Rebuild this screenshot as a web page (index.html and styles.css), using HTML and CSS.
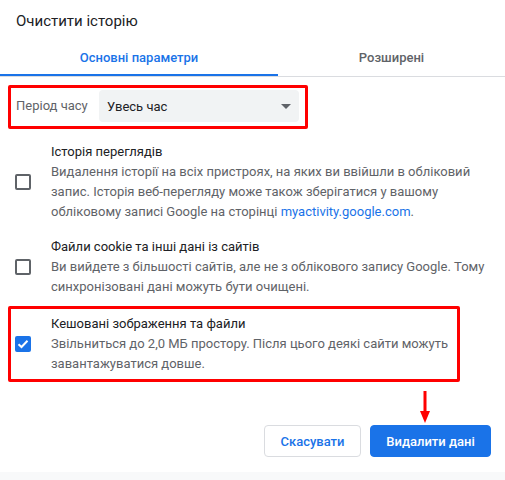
FILE: index.html
```html
<!DOCTYPE html>
<html lang="uk">
<head>
<meta charset="utf-8">
<link rel="stylesheet" href="styles.css">
</head>
<body>
<div class="dialog">
  <div class="header">Очистити історію</div>
  <div class="tabs">
    <div class="tab tab-active">Основні параметри</div>
    <div class="tab">Розширені</div>
  </div>
  <div class="period hl">
    <div class="period-label">Період часу</div>
    <div class="select">
      <span>Увесь час</span>
      <span class="caret"></span>
    </div>
  </div>
  <div class="item item-first">
    <span class="check"></span>
    <div class="item-text">
      <div class="item-title">Історія переглядів</div>
      <div class="item-desc">Видалення історії на всіх пристроях, на яких ви ввійшли в обліковий запис. Історія веб-перегляду може також зберігатися у вашому обліковому записі Google на сторінці <span class="link">myactivity.google.com</span>.</div>
    </div>
  </div>
  <div class="item item-second">
    <span class="check"></span>
    <div class="item-text">
      <div class="item-title">Файли cookie та інші дані із сайтів</div>
      <div class="item-desc">Ви вийдете з більшості сайтів, але не з облікового запису Google. Тому синхронізовані дані можуть бути очищені.</div>
    </div>
  </div>
  <div class="hl hl-item">
    <div class="item item-in-box">
      <span class="check checked">
        <svg width="12" height="10" viewBox="0 0 12 10"><path d="M1.5 5.2 L4.5 8 L10.5 1.8" fill="none" stroke="#fff" stroke-width="2"/></svg>
      </span>
      <div class="item-text">
        <div class="item-title">Кешовані зображення та файли</div>
        <div class="item-desc">Звільниться до 2,0 МБ простору. Після цього деякі сайти можуть завантажуватися довше.</div>
      </div>
    </div>
  </div>
  <div class="actions">
    <button class="btn btn-cancel">Скасувати</button>
    <button class="btn btn-primary">Видалити дані</button>
  </div>
  <div class="footer-strip"></div>
  <svg class="arrow" width="12" height="34" viewBox="0 0 12 34">
    <rect x="4.5" y="0" width="3" height="22" fill="#ff0000"/>
    <polygon points="1,20 11,20 6,32" fill="#ff0000"/>
  </svg>
</div>
</body>
</html>
```

FILE: styles.css
```css
html, body {
  margin: 0;
  padding: 0;
  background: #fff;
}
body {
  font-family: Roboto, "Liberation Sans", Arial, sans-serif;
  font-size: 13px;
  color: #202124;
}
.dialog {
  position: relative;
  width: 505px;
  height: 480px;
  overflow: hidden;
}
.header {
  font-size: 15px;
  line-height: 20px;
  padding: 11px 16px 7px;
  color: #202124;
}
.tabs {
  display: flex;
  height: 38px;
  border-bottom: 1px solid #dadce0;
}
.tab {
  box-sizing: border-box;
  height: 38px;
  display: flex;
  align-items: center;
  justify-content: center;
  font-weight: 500;
  color: #5f6368;
  width: 227px;
  padding-top: 1px;
}
.tab-active {
  width: 278px;
  color: #1a73e8;
  border-bottom: 2px solid #1a73e8;
  padding-top: 3px;
}
.hl {
  box-sizing: border-box;
  border: 3px solid #ff0000;
  border-radius: 2px;
}
.period {
  margin: 8px 0 0 8px;
  width: 300px;
  display: flex;
  align-items: center;
  padding: 2px 6px 4px 5px;
}
.period-label {
  flex: 0 0 83px;
  color: #5f6368;
  line-height: 20px;
}
.select {
  box-sizing: border-box;
  width: 200px;
  height: 32px;
  background: #f1f3f4;
  border-radius: 4px;
  display: flex;
  align-items: center;
  justify-content: space-between;
  padding: 0 8px 0 8px;
  color: #202124;
}
.caret {
  width: 0;
  height: 0;
  border-left: 5px solid transparent;
  border-right: 5px solid transparent;
  border-top: 5px solid #5f6368;
  margin-top: 1px;
}
.item {
  display: flex;
  align-items: center;
  padding-left: 15px;
  padding-right: 16px;
}
.item-first {
  margin-top: 13px;
}
.item-second {
  margin-top: 15px;
}
.hl-item {
  margin: 9px 0 0 8px;
  width: 452px;
  padding: 5px 0;
}
.item-in-box {
  padding-left: 4px;
  padding-right: 0;
}
.check {
  box-sizing: border-box;
  flex: 0 0 16px;
  width: 16px;
  height: 16px;
  border: 2px solid #5f6368;
  border-radius: 2px;
  margin-right: 20px;
  display: flex;
  align-items: center;
  justify-content: center;
}
.check.checked {
  background: #1a73e8;
  border-color: #1a73e8;
}
.item-text {
  width: 438px;
  line-height: 20px;
}
.item-in-box .item-text {
  width: 406px;
}
.item-title {
  color: #202124;
}
.item-desc {
  color: #5f6368;
}
.link {
  color: #1a73e8;
}
.actions {
  display: flex;
  justify-content: flex-end;
  gap: 9px;
  padding-right: 14px;
  margin-top: 43px;
}
.btn {
  box-sizing: border-box;
  height: 32px;
  border-radius: 4px;
  font-family: Roboto, "Liberation Sans", Arial, sans-serif;
  font-size: 13px;
  font-weight: 500;
  padding: 0;
}
.btn-cancel {
  width: 97px;
  background: #fff;
  border: 1px solid #dadce0;
  color: #1a73e8;
}
.btn-primary {
  width: 121px;
  background: #1a73e8;
  border: 1px solid #1a73e8;
  color: #fff;
}
.footer-strip {
  margin-top: 15px;
  height: 10px;
  background: #f8f9fa;
}
.arrow {
  position: absolute;
  left: 419px;
  top: 391px;
}
```
